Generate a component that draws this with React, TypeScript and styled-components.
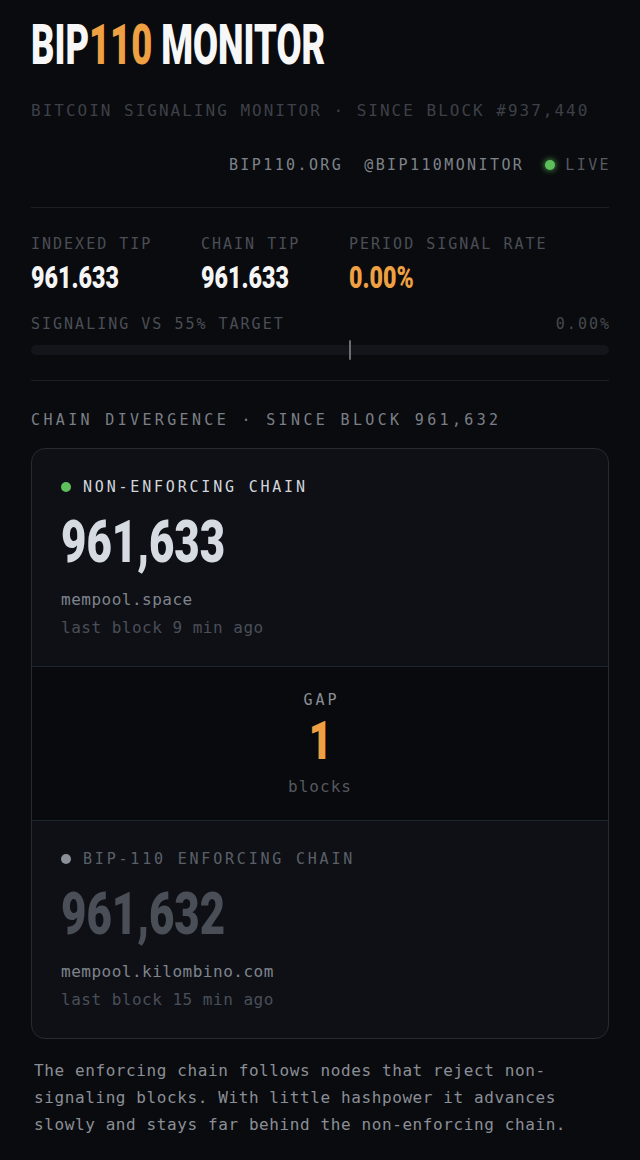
import React from "react";
import styled, { createGlobalStyle } from "styled-components";

const GlobalStyle = createGlobalStyle`
  html, body {
    margin: 0;
    padding: 0;
    background: #0a0b0e;
  }

  #root {
    min-height: 1160px;
  }
`;

const mono = `"DejaVu Sans Mono", "Liberation Mono", monospace`;
const display = `Roboto, "Liberation Sans", sans-serif`;

const Page = styled.div`
  box-sizing: border-box;
  width: 640px;
  min-height: 1160px;
  padding: 18px 31px 0;
  background: #0a0b0e;
  font-family: ${mono};
`;

const Title = styled.h1`
  margin: 0;
  height: 55px;
  font-family: ${display};
  font-weight: 900;
  font-size: 55px;
  line-height: 55px;
  color: #f7f7f8;
  white-space: nowrap;
`;

const Squeeze = styled.span<{ $sx: number; $origin?: string }>`
  display: inline-block;
  transform: scaleX(${(p) => p.$sx});
  transform-origin: ${(p) => p.$origin || "left"} center;
`;

const Accent = styled.span`
  color: #eea042;
`;

const Subtitle = styled.div`
  margin-top: 28px;
  font-size: 16px;
  line-height: 20px;
  letter-spacing: 2px;
  color: #3d4048;
  white-space: nowrap;
`;

const Links = styled.div`
  display: flex;
  justify-content: flex-end;
  align-items: center;
  gap: 21px;
  margin-top: 34px;
  margin-right: -2px;
  font-size: 15px;
  line-height: 20px;
  letter-spacing: 2.4px;
`;

const LinkText = styled.span`
  color: #7e838b;
`;

const Live = styled.span`
  display: flex;
  align-items: center;
  gap: 10px;
  color: #565a62;
`;

const Dot = styled.span<{ $color: string; $glow?: boolean }>`
  display: inline-block;
  width: 10px;
  height: 10px;
  border-radius: 50%;
  background: ${(p) => p.$color};
  box-shadow: ${(p) => (p.$glow ? `0 0 6px ${p.$color}` : "none")};
  flex-shrink: 0;
`;

const Rule = styled.hr<{ $top: number }>`
  margin: ${(p) => p.$top}px 0 0;
  border: 0;
  height: 1px;
  background: #1c1f26;
`;

const Stats = styled.div`
  display: grid;
  grid-template-columns: 170px 148px 1fr;
  margin-top: 26px;
`;

const Stat = styled.div`
  display: flex;
  flex-direction: column;
  gap: 8px;
`;

const Label = styled.div`
  font-size: 15px;
  line-height: 20px;
  letter-spacing: 2px;
  color: #4a4e56;
  white-space: nowrap;
`;

const StatValue = styled.div<{ $accent?: boolean }>`
  font-family: ${display};
  font-weight: 900;
  font-size: 31px;
  line-height: 31px;
  color: ${(p) => (p.$accent ? "#eea042" : "#f5f5f6")};
  white-space: nowrap;
`;

const Meter = styled.div`
  margin-top: 21px;
`;

const MeterHead = styled.div`
  display: flex;
  justify-content: space-between;
`;

const MeterValue = styled(Label)`
  margin-right: -2px;
  color: #45494f;
`;

const Track = styled.div`
  position: relative;
  display: flex;
  align-items: center;
  height: 20px;
  margin-top: 6px;

  &::before {
    content: "";
    flex: 1;
    height: 10px;
    border-radius: 5px;
    background: #13151a;
  }
`;

const Marker = styled.span`
  position: absolute;
  top: 0;
  width: 2px;
  height: 20px;
  border-radius: 1px;
  background: #6a6d73;
`;

const SectionTitle = styled.div`
  margin-top: 29px;
  font-size: 15px;
  line-height: 20px;
  letter-spacing: 3.35px;
  color: #7b7f87;
  white-space: nowrap;
`;

const Card = styled.div`
  margin-top: 18px;
  border: 1px solid #252a33;
  border-radius: 14px;
  overflow: hidden;
  background: #0e1016;
`;

const ChainBlock = styled.div`
  display: flex;
  flex-direction: column;
  padding: 28px 29px 28px;
`;

const ChainLabel = styled.div<{ $muted?: boolean }>`
  display: flex;
  align-items: center;
  gap: 12px;
  font-size: 15px;
  line-height: 20px;
  letter-spacing: 2.8px;
  color: ${(p) => (p.$muted ? "#5b6068" : "#d2d6dc")};
  white-space: nowrap;
`;

const Height = styled.div<{ $muted?: boolean }>`
  margin-top: 15px;
  font-family: ${display};
  font-weight: 900;
  font-size: 60px;
  line-height: 60px;
  color: ${(p) => (p.$muted ? "#4a4e57" : "#d6dae1")};
  white-space: nowrap;
`;

const Source = styled.div`
  margin-top: 18px;
  font-size: 16px;
  line-height: 20px;
  letter-spacing: 0.5px;
  color: #7f848c;
`;

const LastBlock = styled(Source)`
  margin-top: 8px;
  color: #4a4e56;
`;

const GapBlock = styled.div`
  display: flex;
  flex-direction: column;
  align-items: center;
  padding: 23px 0 23px;
  background: #090a0d;
  border-top: 1px solid #1e2630;
  border-bottom: 1px solid #1e2630;
`;

const GapLabel = styled.div`
  font-size: 15px;
  line-height: 20px;
  letter-spacing: 3px;
  margin-right: -3px;
  color: #8a8e96;
`;

const GapValue = styled.div`
  margin-top: 5px;
  font-family: ${display};
  font-weight: 900;
  font-size: 53px;
  line-height: 53px;
  color: #eea042;
`;

const GapUnit = styled.div`
  margin-top: 9px;
  font-size: 16px;
  line-height: 20px;
  letter-spacing: 1px;
  color: #54585f;
`;

const Note = styled.p`
  margin: 18px 0 0;
  padding: 0 0 0 3px;
  font-size: 16px;
  line-height: 27px;
  letter-spacing: 0.6px;
  color: #8a8f97;
`;

type ChainProps = {
  label: string;
  height: string;
  source: string;
  last: string;
  muted?: boolean;
};

const Chain = ({ label, height, source, last, muted }: ChainProps) => (
  <ChainBlock>
    <ChainLabel $muted={muted}>
      <Dot $color={muted ? "#8b8f97" : "#5dc05d"} />
      {label}
    </ChainLabel>
    <Height $muted={muted}>
      <Squeeze $sx={0.73}>{height}</Squeeze>
    </Height>
    <Source>{source}</Source>
    <LastBlock>{last}</LastBlock>
  </ChainBlock>
);

const stats = [
  { label: "INDEXED TIP", value: "961.633" },
  { label: "CHAIN TIP", value: "961.633" },
  { label: "PERIOD SIGNAL RATE", value: "0.00%", accent: true },
];

const App = () => {
  const target = 55;

  return (
    <>
      <GlobalStyle />
      <Page>
        <Title>
          <Squeeze $sx={0.66}>
            BIP<Accent>110</Accent> MONITOR
          </Squeeze>
        </Title>
        <Subtitle>BITCOIN SIGNALING MONITOR · SINCE BLOCK #937,440</Subtitle>
        <Links>
          <LinkText>BIP110.ORG</LinkText>
          <LinkText>@BIP110MONITOR</LinkText>
          <Live>
            <Dot $color="#5cbf5c" $glow />
            LIVE
          </Live>
        </Links>

        <Rule $top={32} />

        <Stats>
          {stats.map((s) => (
            <Stat key={s.label}>
              <Label>{s.label}</Label>
              <StatValue $accent={s.accent}>
                <Squeeze $sx={0.75}>{s.value}</Squeeze>
              </StatValue>
            </Stat>
          ))}
        </Stats>

        <Meter>
          <MeterHead>
            <Label>SIGNALING VS 55% TARGET</Label>
            <MeterValue>0.00%</MeterValue>
          </MeterHead>
          <Track>
            <Marker style={{ left: `${target}%` }} />
          </Track>
        </Meter>

        <Rule $top={20} />

        <SectionTitle>CHAIN DIVERGENCE · SINCE BLOCK 961,632</SectionTitle>

        <Card>
          <Chain
            label="NON-ENFORCING CHAIN"
            height="961,633"
            source="mempool.space"
            last="last block 9 min ago"
          />
          <GapBlock>
            <GapLabel>GAP</GapLabel>
            <GapValue>
              <Squeeze $sx={0.76} $origin="center">
                1
              </Squeeze>
            </GapValue>
            <GapUnit>blocks</GapUnit>
          </GapBlock>
          <Chain
            muted
            label="BIP-110 ENFORCING CHAIN"
            height="961,632"
            source="mempool.kilombino.com"
            last="last block 15 min ago"
          />
        </Card>

        <Note>
          The enforcing chain follows nodes that reject non-signaling blocks.
          With little hashpower it advances slowly and stays far behind the
          non-enforcing chain.
        </Note>
      </Page>
    </>
  );
};

export default App;
